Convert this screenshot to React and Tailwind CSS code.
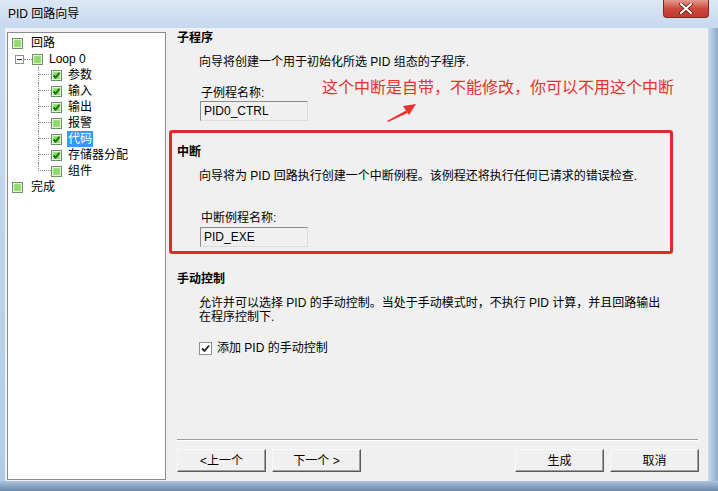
import React from "react";

function GreenBox({ checked }) {
  return (
    <svg width="11" height="11" viewBox="0 0 11 11" className="shrink-0">
      <rect x="0.5" y="0.5" width="10" height="10" fill="#eef8e8" stroke="#6f8f6f" />
      <rect x="2" y="2" width="7" height="7" fill="#8fd86c" stroke="#b9eaa3" strokeWidth="0.6" />
      {checked && (
        <path d="M2.6 5.4 L4.6 7.6 L8.6 2.8" stroke="#17661a" strokeWidth="1.7" fill="none" />
      )}
    </svg>
  );
}

function ChildRow({ label, checked, last, selected }) {
  return (
    <div className="flex h-[16px] items-center">
      <div className="w-[30px] shrink-0" />
      {last ? (
        <div className="w-[13px] h-[16px] flex flex-col shrink-0">
          <div className="h-[8px] border-l border-b border-dotted border-[#8a8a8a]" />
        </div>
      ) : (
        <div className="w-[13px] h-[16px] border-l border-dotted border-[#8a8a8a] flex flex-col shrink-0">
          <div className="h-[8px] border-b border-dotted border-[#8a8a8a]" />
        </div>
      )}
      <GreenBox checked={checked} />
      <div className="w-[5px] shrink-0" />
      <span
        className={
          selected
            ? "bg-[#3399ff] text-white px-[1px] h-[16px] leading-[16px] whitespace-nowrap"
            : "px-[1px] leading-[16px] whitespace-nowrap"
        }
      >
        {label}
      </span>
    </div>
  );
}

function Btn({ children }) {
  return (
    <div className="w-[89px] h-[23px] flex items-center justify-center bg-[#f0f0f0] border border-t-[#f8f8f8] border-l-[#f8f8f8] border-r-[#5a5a5a] border-b-[#5a5a5a] shadow-[inset_-1px_-1px_0_#a0a0a0] whitespace-nowrap">
      {children}
    </div>
  );
}

export default function App() {
  return (
    <div className="w-[718px] h-[491px] flex flex-col overflow-hidden bg-[#c3d7ee] text-[12px] text-black font-['Liberation_Sans','Noto_Sans_CJK_SC',sans-serif]">
      {/* title bar */}
      <div className="h-[28px] shrink-0 relative flex items-center pl-[8px] bg-linear-to-b from-[#dbe7f5] to-[#c6d9ef]">
        <span className="whitespace-nowrap">PID 回路向导</span>
        <div className="absolute right-[9px] top-0 w-[46px] h-[18px] rounded-b-[4px] border border-t-0 border-[#7a2a22] bg-linear-to-b from-[#e39a8f] via-[#cc4a3c] to-[#c0392c] flex items-center justify-center">
          <svg width="14" height="11" viewBox="0 0 14 11">
            <path d="M2 1 L12 10 M12 1 L2 10" stroke="#5a1a14" strokeWidth="3.6" strokeLinecap="round" />
            <path d="M2 1 L12 10 M12 1 L2 10" stroke="#ffffff" strokeWidth="2" strokeLinecap="round" />
          </svg>
        </div>
      </div>

      {/* middle */}
      <div className="flex flex-1 min-h-0">
        <div className="w-[5px] shrink-0 bg-linear-to-b from-[#c9dbef] to-[#b3cbe6]" />
        <div className="flex-1 bg-[#f0f0f0] flex pl-[2px]">
          {/* tree */}
          <div className="w-[159px] h-[448px] mt-[4px] shrink-0 bg-white border border-[#8a8c90] pt-[2px]">
            <div className="flex h-[16px] items-center pl-[4px]">
              <GreenBox />
              <span className="ml-[8px] leading-[16px]">回路</span>
            </div>
            <div className="flex h-[16px] items-center">
              <div className="w-[7px] shrink-0" />
              <div className="w-[9px] h-[9px] shrink-0 border border-[#8f8f8f] bg-white flex items-center justify-center">
                <div className="w-[5px] h-[1px] bg-[#333]" />
              </div>
              <div className="w-[8px] h-[1px] border-t border-dotted border-[#8a8a8a] shrink-0" />
              <GreenBox />
              <span className="ml-[6px] leading-[16px] whitespace-nowrap">Loop 0</span>
            </div>
            <ChildRow label="参数" checked />
            <ChildRow label="输入" checked />
            <ChildRow label="输出" checked />
            <ChildRow label="报警" />
            <ChildRow label="代码" checked selected />
            <ChildRow label="存储器分配" checked />
            <ChildRow label="组件" last />
            <div className="flex h-[16px] items-center pl-[4px]">
              <GreenBox />
              <span className="ml-[8px] leading-[16px]">完成</span>
            </div>
          </div>

          {/* right panel */}
          <div className="flex-1 relative flex flex-col pt-[2px]">
            <div className="pl-[11px] font-bold leading-[16px] h-[16px]">子程序</div>
            <div className="pl-[33px] mt-[8px] leading-[16px] whitespace-nowrap">
              向导将创建一个用于初始化所选 PID 组态的子程序.
            </div>
            <div className="pl-[35px] mt-[15px] leading-[16px]">子例程名称:</div>
            <div className="pl-[34px]">
              <div className="w-[108px] h-[20px] border border-t-[#8a8a8a] border-l-[#8a8a8a] border-r-[#dcdcdc] border-b-[#dcdcdc] bg-[#f0f0f0] pl-[3px] leading-[18px]">
                PID0_CTRL
              </div>
            </div>

            <div className="pl-[11px] mt-[23px] font-bold leading-[16px] h-[16px]">中断</div>
            <div className="pl-[33px] mt-[8px] leading-[16px] whitespace-nowrap">
              向导将为 PID 回路执行创建一个中断例程。该例程还将执行任何已请求的错误检查.
            </div>
            <div className="pl-[35px] mt-[26px] leading-[16px]">中断例程名称:</div>
            <div className="pl-[34px] mt-[1px]">
              <div className="w-[108px] h-[20px] border border-t-[#8a8a8a] border-l-[#8a8a8a] border-r-[#dcdcdc] border-b-[#dcdcdc] bg-[#f0f0f0] pl-[3px] leading-[18px]">
                PID_EXE
              </div>
            </div>

            <div className="pl-[11px] mt-[24px] font-bold leading-[16px] h-[16px]">手动控制</div>
            <div className="pl-[33px] mt-[9px] leading-[14px] whitespace-nowrap">
              允许并可以选择 PID 的手动控制。当处于手动模式时，不执行 PID 计算，并且回路输出
              <br />
              在程序控制下.
            </div>
            <div className="pl-[33px] mt-[16px] flex items-center h-[16px]">
              <div className="w-[13px] h-[13px] border border-[#8e8f8f] bg-white flex items-center justify-center shrink-0">
                <svg width="9" height="9" viewBox="0 0 9 9">
                  <path d="M1 4.5 L3.5 7 L8 1.5" stroke="#222" strokeWidth="1.8" fill="none" />
                </svg>
              </div>
              <span className="ml-[5px] leading-[16px] whitespace-nowrap">添加 PID 的手动控制</span>
            </div>

            <div className="flex-1" />
            <div className="ml-[11px] mr-[10px] border-t border-[#a0a0a0] border-b border-b-white" />
            <div className="flex items-center pl-[11px] pr-[9px] mt-[8px] mb-[9px] gap-[6px]">
              <Btn>&lt;上一个</Btn>
              <Btn>下一个 &gt;</Btn>
              <div className="flex-1" />
              <Btn>生成</Btn>
              <Btn>取消</Btn>
            </div>

            {/* red annotation box */}
            <div className="absolute left-[3px] top-[102px] w-[504px] h-[124px] border-[3px] border-[#e02b2b] rounded-[3px] pointer-events-none" />
            <div className="absolute left-[156px] top-[50px] text-[16px] leading-[20px] text-[#e8312e] whitespace-nowrap">
              这个中断是自带，不能修改，你可以不用这个中断
            </div>
            <svg className="absolute left-[218px] top-[72px]" width="36" height="24" viewBox="0 0 36 24">
              <path d="M3 21 L22 10.5 L23.5 13 L4 22 Z" fill="#e8312e" />
              <path d="M19 6 L32 4 L25 15 Z" fill="#e8312e" />
            </svg>
          </div>
        </div>
        <div className="w-[10px] shrink-0 bg-linear-to-r from-[#c9dbef] to-[#8fa9c8]" />
      </div>
      <div className="h-[10px] shrink-0 bg-linear-to-b from-[#aec5e0] to-[#6a86a8]" />
    </div>
  );
}
